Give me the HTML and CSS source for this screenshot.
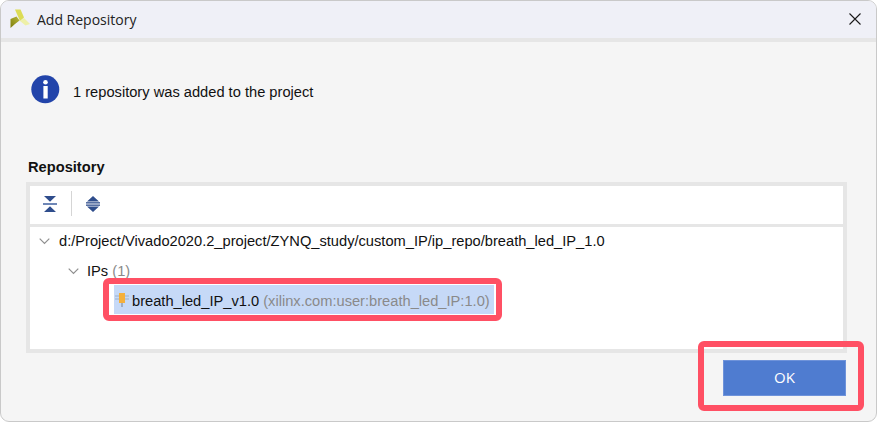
FILE: index.html
```html
<!DOCTYPE html>
<html lang="en">
<head>
<meta charset="utf-8">
<title>Add Repository</title>
<link rel="stylesheet" href="styles.css">
</head>
<body>
<div class="window">
  <header class="titlebar">
    <svg class="logo" width="20" height="20" viewBox="0 0 20 20">
      <defs><linearGradient id="olive" x1="0" y1="1" x2="1" y2="0"><stop offset="0" stop-color="#7d7d0e"/><stop offset="1" stop-color="#b9b93a"/></linearGradient></defs>
      <path d="M5 .5 L10.5 .5 L14 8.5 L10 12 Z" fill="#dcdc55"/>
      <path d="M10 12 L14 9 L20 15 L15.5 16.5 Z" fill="#eef0a8"/>
      <path d="M.5 19 L.5 10 L6.5 7.5 L9.5 11.5 L5 15 Z" fill="url(#olive)"/>
    </svg>
    <span class="title">Add Repository</span>
    <svg class="close" width="12" height="12" viewBox="0 0 12 12"><path d="M.5 .5 L11.5 11.5 M11.5 .5 L.5 11.5" stroke="#1a1a1a" stroke-width="1.1" fill="none"/></svg>
  </header>
  <main class="content">
    <div class="message">
      <svg class="info" width="29" height="29" viewBox="0 0 29 29">
        <circle cx="14.3" cy="14.3" r="14" fill="#2244aa"/>
        <circle cx="14.5" cy="7.2" r="2.3" fill="#fff"/>
        <rect x="12.4" y="11" width="4.3" height="12.5" fill="#fff"/>
      </svg>
      <span class="message-text">1 repository was added to the project</span>
    </div>
    <h2 class="section">Repository</h2>
    <section class="panel">
      <div class="toolbar">
        <svg width="14" height="16" viewBox="0 0 14 16"><path d="M1 0 H13 L7 5.8 Z M1 16 H13 L7 10.2 Z" fill="#2f4d8c"/><rect y="7" width="14" height="2" fill="#6f87b6"/></svg>
        <span class="divider"></span>
        <svg width="14" height="16" viewBox="0 0 14 16"><path d="M7 0 L13 5.5 H1 Z M7 16 L1 10.5 H13 Z" fill="#2f4d8c"/><rect y="6.2" width="14" height="1.3" fill="#2f4d8c"/><rect y="8.5" width="14" height="1.3" fill="#2f4d8c"/></svg>
      </div>
      <div class="tree">
        <div class="row row-root">
          <svg class="chev" width="11" height="7" viewBox="0 0 11 7"><path d="M.7 .7 L5.5 5.5 L10.3 .7" stroke="#8f8f8f" stroke-width="1.2" fill="none"/></svg>
          <span>d:/Project/Vivado2020.2_project/ZYNQ_study/custom_IP/ip_repo/breath_led_IP_1.0</span>
        </div>
        <div class="row row-ips">
          <svg class="chev" width="11" height="7" viewBox="0 0 11 7"><path d="M.7 .7 L5.5 5.5 L10.3 .7" stroke="#8f8f8f" stroke-width="1.2" fill="none"/></svg>
          <span>IPs <span class="muted">(1)</span></span>
        </div>
        <div class="row-selected">
          <svg class="ip" width="14" height="14" viewBox="0 0 14 14">
            <path d="M0 3 H14 M0 6 H14" stroke="#9fb0c6" stroke-width="1" fill="none"/>
            <path d="M7 10 V14" stroke="#8e9aae" stroke-width="1.4" fill="none"/>
            <rect x="4" y="0" width="6" height="10" fill="#f5b03c"/>
          </svg>
          <span class="row-label">breath_led_IP_v1.0 <span class="muted">(xilinx.com:user:breath_led_IP:1.0)</span></span>
        </div>
      </div>
    </section>
    <footer class="actions"><button class="ok" type="button">OK</button></footer>
  </main>
  <div class="mark mark-row"></div>
  <div class="mark mark-ok"></div>
</div>
</body>
</html>
```
FILE: styles.css
```css
* { box-sizing: border-box; }
html, body { margin: 0; padding: 0; }
body { width: 877px; height: 422px; overflow: hidden; background: #fff; font-family: "Liberation Sans", Arial, sans-serif; }
.window { position: relative; width: 877px; height: 422px; display: flex; flex-direction: column; background: #f5f5f5; border: 1px solid #c9c9c9; border-radius: 9px; overflow: hidden; font-family: "Liberation Sans", Arial, sans-serif; color: #111; font-size: 14.67px; }
.titlebar { flex: none; height: 41px; display: flex; align-items: center; padding: 0 16px 1px 9px; background: #eff0f7; border-bottom: 4px solid #e6e6e6; }
.logo { margin-right: 7px; }
.title { font-family: "Open Sans", "Liberation Sans", sans-serif; font-size: 14px; flex: 1; color: #222; }
.close { margin-right: -1px; }
.content { flex: 1; display: flex; flex-direction: column; padding: 0 29px 0 25px; min-height: 0; }
.message { display: flex; align-items: center; gap: 13px; height: 29px; margin: 33px 0 0 5px; }
.message-text { padding-top: 4px; }
.section { margin: 54px 0 0 2px; height: 24px; font-size: 14.67px; font-weight: 700; line-height: 18px; }
.panel { display: flex; flex-direction: column; height: 171px; border: 4px solid #e6e6e6; background: #fff; }
.toolbar { flex: none; height: 41px; display: flex; align-items: center; padding: 0 0 3px 13px; border-bottom: 3px solid #e6e6e6; }
.divider { width: 1px; height: 25px; background: #d5d5d5; margin: 0 14px 0 14px; }
.tree { flex: 1; padding-top: 1px; }
.row { display: flex; align-items: center; }
.row-root { padding-left: 9px; height: 26px; }
.row-root .chev { margin-right: 9px; }
.row-ips { padding: 3px 0 0 38px; height: 31px; }
.chev { margin-right: 8px; }
.muted { color: #8a8a8a; }
.row-selected { display: flex; align-items: center; width: 380px; height: 29px; margin-left: 84px; background: #c6d9f7; padding-left: 1px; }
.ip { margin-right: 3px; }
.row-label { padding-top: 2px; }
.actions { display: flex; justify-content: flex-end; padding: 7px 1px 0 0; }
.ok { width: 123px; height: 36px; background: #4f7cd0; border: 1px solid #6f93da; color: #fff; font-family: "Open Sans", "Liberation Sans", sans-serif; font-size: 15px; padding: 0 0 2px; }
.mark { position: absolute; border: 6px solid #ff5064; border-radius: 6px; pointer-events: none; }
.mark-row { left: 102px; top: 277px; width: 399px; height: 43px; }
.mark-ok { left: 697px; top: 340px; width: 166px; height: 70px; }
```
